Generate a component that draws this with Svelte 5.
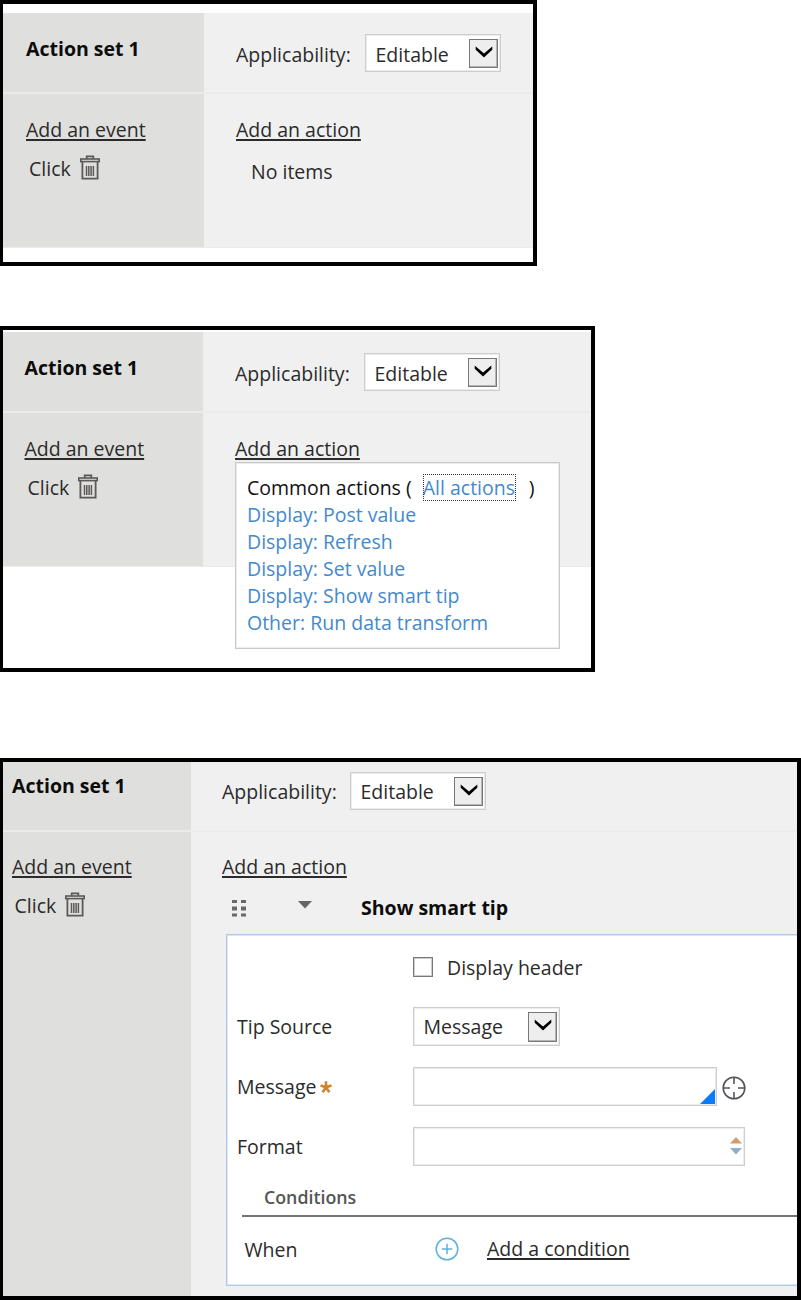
<script lang="ts">
	const actions = [
		'Display: Post value',
		'Display: Refresh',
		'Display: Set value',
		'Display: Show smart tip',
		'Other: Run data transform'
	];
</script>

{#snippet select(value: string)}
	<div class="select">
		<span>{value}</span>
		<span class="select-btn">
			<svg width="18" height="12" viewBox="0 0 18 12">
				<path d="M0.7 0.4 L9 7.6 L17.3 0.4 V3.8 L9 11.4 L0.7 3.8 Z" fill="#000" />
			</svg>
		</span>
	</div>
{/snippet}

{#snippet side()}
	<div class="side head"><b>Action set 1</b></div>
{/snippet}

{#snippet applicability()}
	<div class="main head">
		<span class="app-label">Applicability:</span>
		{@render select('Editable')}
	</div>
{/snippet}

{#snippet events()}
	<div class="side body">
		<a class="link">Add an event</a>
		<div class="event">
			<span>Click</span>
			<svg width="20" height="25" viewBox="0 0 20 25" fill="none" stroke="#5c5959">
				<path d="M6.7 3.7 V1.4 H13.3 V3.7" stroke-width="1.8" />
				<rect x="0.8" y="4" width="18.4" height="2.6" stroke-width="1.6" />
				<path d="M2.4 7 V23.7 H17.6 V7" stroke-width="1.8" />
				<path d="M6.5 11 V21 M8.8 11 V21 M11.1 11 V21 M13.4 11 V21" stroke-width="1.5" />
			</svg>
		</div>
	</div>
{/snippet}

<div class="page">
	<section class="panel first">
		<div class="set">
			{@render side()}
			{@render applicability()}
			{@render events()}
			<div class="main body">
				<a class="link">Add an action</a>
				<div class="empty">No items</div>
			</div>
		</div>
	</section>

	<section class="panel second">
		<div class="set">
			{@render side()}
			{@render applicability()}
			{@render events()}
			<div class="main body">
				<div class="anchor">
					<a class="link">Add an action</a>
					<div class="menu">
						<div class="menu-head">
							<span>Common actions (</span>
							<a class="focused">All actions</a>
							<span>)</span>
						</div>
						{#each actions as action}
							<a class="menu-item">{action}</a>
						{/each}
					</div>
				</div>
			</div>
		</div>
	</section>

	<section class="panel third">
		<div class="set">
			{@render side()}
			{@render applicability()}
			{@render events()}
			<div class="main body">
				<a class="link">Add an action</a>
				<div class="action-title">
					<svg class="grip" width="15" height="17" viewBox="0 0 15 17" fill="#6b6767">
						<path d="M0 0h5v3H0z M9 0h5v3H9z M0 6.5h5v4H0z M9 6.5h5v4H9z M0 13.5h5v3H0z M9 13.5h5v3H9z" />
					</svg>
					<svg class="caret" width="14" height="8" viewBox="0 0 14 8" fill="#666">
						<path d="M0 0 H14 L7 7.6 Z" />
					</svg>
					<b>Show smart tip</b>
				</div>

				<div class="form">
					<div class="row check-row">
						<span></span>
						<span class="checkbox"></span>
						<span>Display header</span>
					</div>
					<div class="row">
						<span>Tip Source</span>
						{@render select('Message')}
					</div>
					<div class="row">
						<span class="required">
							Message
							<svg width="12" height="12" viewBox="0 0 12 12" stroke="#d0842f" stroke-width="2.6">
								<path d="M6 6.2 V0.3 M6 6.2 L0.5 4.4 M6 6.2 L11.5 4.4 M6 6.2 L2.6 11.2 M6 6.2 L9.4 11.2" />
							</svg>
						</span>
						<div class="input message">
							<svg width="15" height="15" viewBox="0 0 15 15"><path d="M15 0 V15 H0 Z" fill="#0a7bff" /></svg>
						</div>
						<svg class="target" width="24" height="24" viewBox="0 0 24 24" fill="none" stroke="#55535a" stroke-width="1.6">
							<circle cx="12" cy="12" r="10.8" />
							<path d="M12 1 V8 M12 16 V23 M1 12 H8 M16 12 H23" />
						</svg>
					</div>
					<div class="row">
						<span>Format</span>
						<div class="input format">
							<svg width="12" height="18" viewBox="0 0 12 18">
								<path d="M0 6.6 L6 0 L12 6.6 Z" fill="#d19c70" />
								<path d="M0 11 L6 17.4 L12 11 Z" fill="#8eafc7" />
							</svg>
						</div>
					</div>
					<div class="conditions">Conditions</div>
					<div class="when">
						<span>When</span>
						<svg width="24" height="24" viewBox="0 0 24 24" fill="none" stroke="#5cb3df" stroke-width="1.5">
							<circle cx="12" cy="12" r="10.8" />
							<path d="M12 6.8 V17.2 M6.8 12 H17.2" />
						</svg>
						<a class="link">Add a condition</a>
					</div>
				</div>
			</div>
		</div>
	</section>
</div>

<style>
	:global(body) {
		background: #fff;
	}

	.page {
		width: 801px;
		height: 1300px;
		overflow: hidden;
		font-family: 'Open Sans', 'Noto Sans', sans-serif;
		font-size: 19.5px;
		line-height: 27px;
		color: #2b2b2b;
		white-space: nowrap;
	}

	.page * {
		box-sizing: border-box;
	}

	svg {
		display: block;
		flex: none;
	}

	b {
		color: #0c0c0c;
	}

	.panel {
		border: 4px solid #000;
		border-left-width: 3px;
		overflow: hidden;
	}

	.first {
		--side: 201px;
		--pad: 23px;
		--main-pad: 32px;
		--drop: 22px;
		width: 537px;
		height: 266px;
		padding-top: 9px;
	}

	.second {
		--side: 200px;
		--pad: 21.5px;
		--main-pad: 32px;
		--drop: 22px;
		width: 595px;
		height: 346px;
		margin-top: 60px;
		padding-top: 2px;
	}

	.third {
		--side: 188px;
		--pad: 9px;
		--main-pad: 31px;
		--drop: 21px;
		width: 801px;
		height: 542px;
		margin-top: 86px;
	}

	.third .set {
		margin-top: -11px;
		grid-template-rows: 81px 500px;
	}

	.set {
		display: grid;
		grid-template-columns: var(--side) 1fr;
		grid-template-rows: 81px 154px;
	}

	.side {
		padding-left: var(--pad);
		background: #dfdfdd;
	}

	.main {
		padding-left: var(--main-pad);
		background: #f0f0f0;
		min-width: 0;
	}

	.head {
		padding-top: var(--drop);
		border-bottom: 2px solid #ebebea;
	}

	.main.head {
		display: flex;
		align-items: flex-start;
	}

	.head .select {
		margin-top: calc(21px - var(--drop));
	}

	.app-label {
		width: 129px;
		padding-top: 6px;
	}

	.third .app-label {
		width: 128px;
	}

	.body {
		padding-top: var(--drop);
		border-bottom: 1px solid #ebebea;
	}

	.link {
		display: inline-block;
		height: 27px;
		text-decoration: underline;
		text-decoration-thickness: 1.5px;
		text-underline-offset: 2px;
		text-decoration-skip-ink: none;
	}

	.event {
		display: flex;
		gap: 9px;
		margin: 12px 0 0 3px;
	}

	.third .event {
		gap: 8.5px;
		margin-left: 2.5px;
	}

	.empty {
		margin: 15px 0 0 15px;
	}

	.select {
		display: flex;
		justify-content: space-between;
		align-items: center;
		width: 136px;
		height: 38px;
		padding: 0 2px 0 9.5px;
		border: 1px solid #cdcdcd;
		box-shadow: inset 0 0 0 1px #ececec;
		background: #fff;
	}

	.select span:first-child {
		padding-top: 2px;
	}

	.third .select span:first-child {
		padding-top: 1px;
	}

	.select-btn {
		display: grid;
		place-items: center;
		width: 29px;
		height: 29px;
		padding-bottom: 3px;
		border: 1px solid #777;
		box-shadow: inset -1px -1px 0 #b5b5b5;
		background: #eee;
	}

	.anchor {
		position: relative;
	}

	.menu {
		position: absolute;
		top: 27px;
		left: 0;
		width: 325px;
		height: 187px;
		padding: 11px;
		border: 1px solid #c9c9c9;
		box-shadow: inset 0 0 0 1px #ececec;
		background: #fff;
	}

	.menu-head {
		display: flex;
		height: 27.4px;
		color: #111;
	}

	.menu a {
		color: #4489cb;
	}

	.menu-item {
		display: block;
	}

	.focused {
		width: 93px;
		margin: 0 13px 0 11px;
		outline: 1.5px dotted #333;
		outline-offset: -1px;
	}

	.action-title {
		display: flex;
		margin: 14px 0 0 10px;
	}

	.grip {
		margin: 6px 51px 0 0;
	}

	.caret {
		margin: 7px 49px 0 0;
	}

	.form {
		width: 590px;
		height: 352px;
		margin: 13px 0 0 4px;
		padding: 12px 0 0 10px;
		border: 1px solid #afc8ee;
		box-shadow: inset 0 0 0 1px #dbe6f7;
		background: #fff;
	}

	.row {
		display: grid;
		grid-template-columns: 176px auto auto;
		justify-content: start;
		align-items: center;
		height: 39px;
		margin-bottom: 21px;
	}

	.check-row {
		padding-top: 1px;
	}

	.check-row .checkbox {
		width: 20px;
		height: 20px;
		margin: 0 14px 1px 0;
		border: 1.5px solid #777;
		box-shadow: inset 0 0 0 1px #ccc;
	}

	.row .select {
		width: 147px;
		height: 39px;
	}

	.third .row .select span:first-child {
		padding-top: 0;
	}

	.row .select-btn {
		height: 30px;
	}

	.required {
		display: flex;
		gap: 4px;
	}

	.required svg {
		margin-top: 8px;
	}

	.input {
		display: flex;
		justify-content: flex-end;
		height: 39px;
		border: 1px solid #cdcdcd;
		box-shadow: inset 0 0 0 1px #ececec;
	}

	.message {
		align-items: flex-end;
		width: 304px;
		padding: 0 1px 1px 0;
	}

	.target {
		margin: 3px 0 0 5px;
	}

	.format {
		align-items: center;
		width: 332px;
		padding: 0 2px 2px 0;
	}

	.conditions {
		height: 30px;
		margin-left: 5px;
		padding-left: 22px;
		border-bottom: 2px solid #747474;
		font-size: 17.8px;
		font-weight: 600;
		line-height: 20px;
		color: #555;
	}

	.when {
		display: flex;
		align-items: center;
		margin: 18px 0 0 7.5px;
	}

	.when span {
		width: 190.5px;
		padding-top: 1px;
	}

	.when svg {
		margin-top: -1px;
	}

	.when .link {
		margin: -2px 0 0 28px;
	}
</style>
